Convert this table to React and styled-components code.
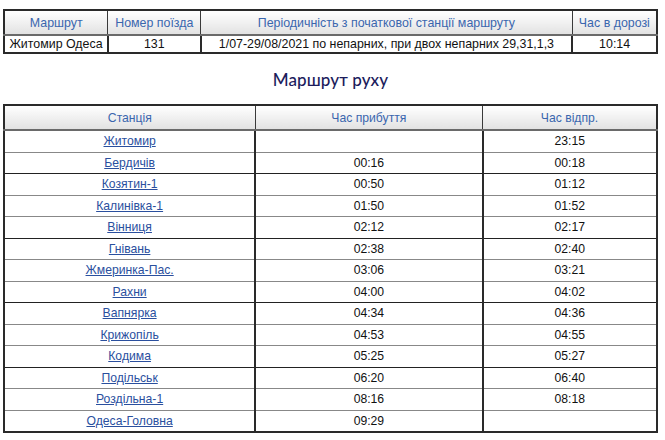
import React from "react";
import styled, { createGlobalStyle } from "styled-components";

const GlobalStyle = createGlobalStyle`
  body {
    margin: 0;
    background: #fff;
    font-family: "Liberation Sans", Arial, sans-serif;
  }
`;

const Page = styled.div`
  padding: 9px 7px 0 3px;
`;

const Table = styled.table`
  width: 655px;
  border-collapse: collapse;
  border: 2px solid #2a2a2a;
  font-size: ${(p) => p.fs || 12.4}px;
  color: #111;
`;

const Head = styled.th`
  height: ${(p) => p.h || 23}px;
  padding: 0 4px;
  font-weight: normal;
  color: #3a66ae;
  background: linear-gradient(#ffffff, #e2e2e2);
  border: 1px solid #3a3a3a;
  border-bottom: 2px solid #6a6a6a;
  white-space: nowrap;
  text-align: center;
`;

const Cell = styled.td`
  height: ${(p) => p.h || 20.5}px;
  padding: 0 4px;
  text-align: center;
  white-space: nowrap;
  border-left: 2px solid #2a2a2a;
  border-top: 1px solid ${(p) => (p.dark ? "#222" : "#888")};
`;

const StationLink = styled.a`
  color: #2a4f9e;
  text-decoration: underline;
`;

const Title = styled.h2`
  margin: 15px 0 13px;
  line-height: 22px;
  text-align: center;
  font-family: Lato, "DejaVu Sans", sans-serif;
  font-weight: 500;
  font-size: 17px;
  color: #1c1c5c;
  letter-spacing: 0.1px;
`;

const stops = [
  ["Житомир", "", "23:15"],
  ["Бердичів", "00:16", "00:18"],
  ["Козятин-1", "00:50", "01:12"],
  ["Калинівка-1", "01:50", "01:52"],
  ["Вінниця", "02:12", "02:17"],
  ["Гнівань", "02:38", "02:40"],
  ["Жмеринка-Пас.", "03:06", "03:21"],
  ["Рахни", "04:00", "04:02"],
  ["Вапнярка", "04:34", "04:36"],
  ["Крижопіль", "04:53", "04:55"],
  ["Кодима", "05:25", "05:27"],
  ["Подільськ", "06:20", "06:40"],
  ["Роздільна-1", "08:16", "08:18"],
  ["Одеса-Головна", "09:29", ""],
];

export default function App() {
  return (
    <Page>
      <GlobalStyle />
      <Table>
        <colgroup>
          <col style={{ width: 104 }} />
          <col style={{ width: 93 }} />
          <col style={{ width: 373 }} />
          <col style={{ width: 85 }} />
        </colgroup>
        <thead>
          <tr>
            <Head>Маршрут</Head>
            <Head>Номер поїзда</Head>
            <Head>Періодичність з початкової станції маршруту</Head>
            <Head>Час в дорозі</Head>
          </tr>
        </thead>
        <tbody>
          <tr>
            <Cell h={16}>Житомир Одеса</Cell>
            <Cell h={16}>131</Cell>
            <Cell h={16}>1/07-29/08/2021 по непарних, при двох непарних 29,31,1,3</Cell>
            <Cell h={16}>10:14</Cell>
          </tr>
        </tbody>
      </Table>

      <Title>Маршрут руху</Title>

      <Table fs={12.2}>
        <colgroup>
          <col style={{ width: 252 }} />
          <col style={{ width: 228 }} />
          <col style={{ width: 175 }} />
        </colgroup>
        <thead>
          <tr>
            <Head>Станція</Head>
            <Head>Час прибуття</Head>
            <Head>Час відпр.</Head>
          </tr>
        </thead>
        <tbody>
          {stops.map(([name, arr, dep], i) => (
            <tr key={name}>
              <Cell dark={i % 3 === 2}>
                <StationLink href="#">{name}</StationLink>
              </Cell>
              <Cell dark={i % 3 === 2}>{arr}</Cell>
              <Cell dark={i % 3 === 2}>{dep}</Cell>
            </tr>
          ))}
        </tbody>
      </Table>
    </Page>
  );
}
